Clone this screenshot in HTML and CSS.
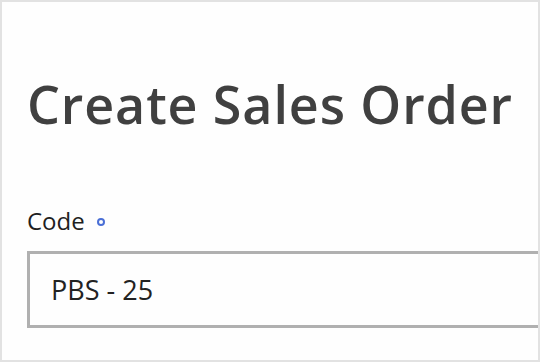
FILE: index.html
```html
<!DOCTYPE html>
<html lang="en">
  <head>
    <meta charset="UTF-8" />
    <meta name="viewport" content="width=device-width, initial-scale=1.0" />
    <title>Create Sales Order</title>
    <link rel="stylesheet" href="styles.css">
  </head>
  <body>
    <!-- Form page frame -->
    <div class="frame">
      <h1 class="page-title">Create Sales Order</h1>

      <!-- Code field -->
      <div class="field">
        <label class="field-label" for="code">
          Code <span class="required-dot"></span>
        </label>
        <input id="code" class="field-input" type="text" value="PBS - 25" />
      </div>
    </div>
  </body>
</html>
```

FILE: styles.css
```css
body {
  margin: 0;
  padding: 0;
  background-color: #ffffff;
  font-family: "Open Sans", "Noto Sans", Arial, sans-serif;
}

/* Outer frame around the screenshot */
.frame {
  width: 540px;
  height: 362px;
  box-sizing: border-box;
  border: 2px solid #e2e2e2;
  padding-left: 25px;
  overflow: hidden;
  background-color: #fefefe;
}

/* Page heading */
.page-title {
  margin: 66px 0 0 0;
  font-size: 52px;
  font-weight: 600;
  color: #404040;
  line-height: 72px;
  letter-spacing: 0.9px;
}

/* Form field */
.field {
  margin-top: 65px;
}

.field-label {
  display: flex;
  align-items: center;
  gap: 12px;
  font-size: 24px;
  color: #1f1f1f;
  line-height: 32px;
}

.required-dot {
  width: 4px;
  height: 4px;
  border: 2.5px solid #4a6fd6;
  border-radius: 50%;
  margin-top: 1px;
}

.field-input {
  display: block;
  margin-top: 14px;
  width: 560px;
  height: 77px;
  box-sizing: border-box;
  border: 3px solid #b0b0b0;
  padding: 0 21px;
  font-family: "Open Sans", "Noto Sans", Arial, sans-serif;
  font-size: 27px;
  color: #222;
  background-color: #fefefe;
  outline: none;
}
```
